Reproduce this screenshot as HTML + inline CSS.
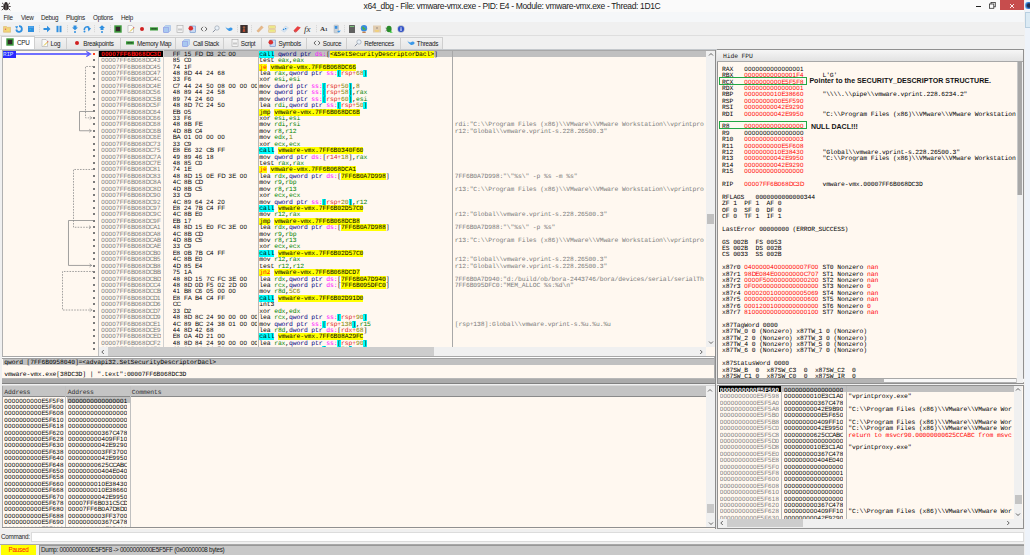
<!DOCTYPE html><html><head><meta charset="utf-8"><style>
*{margin:0;padding:0;box-sizing:border-box}
html,body{width:1030px;height:555px;overflow:hidden;background:#f0f0f0;position:relative}
div{position:absolute}
.m{font-family:"Liberation Mono",monospace;font-size:6.4px;letter-spacing:-0.12px;line-height:6.42px;white-space:pre;color:#000;text-rendering:geometricPrecision;padding-top:1.5px}
.h{font-family:"Liberation Sans",sans-serif;font-size:6.2px;letter-spacing:0.272px}
.h b{font-weight:inherit;display:inline-block;width:3.72px;text-align:center;letter-spacing:0}
.h s{text-decoration:none;letter-spacing:1.9975px}
.u{font-family:"Liberation Sans",sans-serif;font-size:6.3px;letter-spacing:-0.25px;line-height:10px;white-space:pre;color:#1e1e1e}
</style></head><body><div style="left:0px;top:0px;width:1024px;height:11.5px;background:#fafafa"></div><div style="left:1025px;top:0px;width:5px;height:555px;background:#eef3fa"></div><div style="left:1025px;top:1.5px;width:5px;height:7.5px;background:radial-gradient(circle at 80% 50%,#203050 30%,#3a8ae0 60%,#eef3fa 90%)"></div><div style="left:1025px;top:12px;width:5px;height:16px;background:#dbeaf4;border:1px solid #b8cfe0;border-right:none"></div><svg style="position:absolute;left:1px;top:1px;overflow:visible" width="10" height="10" viewBox="0 0 10 10"><g stroke="#3a3030" stroke-width="0.9" fill="none"><path d="M1 1.8L2.8 3.5M9 1.8L7.2 3.5M0.3 5.5H2.3M9.7 5.5H7.7M0.8 9.2L2.6 7.5M9.2 9.2L7.4 7.5"/></g><ellipse cx="5" cy="6" rx="2.7" ry="3.2" fill="#2e2626"/><circle cx="5" cy="2.6" r="1.6" fill="#2e2626"/><path d="M5 3.5V9" stroke="#b0b0b0" stroke-width="0.6"/></svg><div class="u" style="left:0;top:0.5px;width:1024px;text-align:center;font-size:8.5px;letter-spacing:-0.35px;line-height:11px;color:#1a1a1a">x64_dbg - File: vmware-vmx.exe - PID: E4 - Module: vmware-vmx.exe - Thread: 1D1C</div><div style="left:975.5px;top:5.5px;width:5px;height:1.3px;background:#222"></div><svg style="position:absolute;left:989px;top:2px;overflow:visible" width="7" height="7" viewBox="0 0 7 7"><rect x="2" y="0.5" width="4.3" height="4.3" fill="none" stroke="#333" stroke-width="0.8"/><rect x="0.5" y="2" width="4.3" height="4.3" fill="#fafafa" stroke="#333" stroke-width="0.8"/></svg><div style="left:999.5px;top:0px;width:24.5px;height:10px;background:#c74d4d"></div><svg style="position:absolute;left:1008.5px;top:2.5px;overflow:visible" width="6" height="6" viewBox="0 0 6 6"><path d="M1 1L5 5M5 1L1 5" stroke="#fff" stroke-width="0.9"/></svg><div style="left:0px;top:11.5px;width:1024px;height:10.5px;background:#f5f7f9"></div><div class="u" style="left:3.5px;top:12.7px;">File</div><div class="u" style="left:21px;top:12.7px;">View</div><div class="u" style="left:41px;top:12.7px;">Debug</div><div class="u" style="left:66px;top:12.7px;">Plugins</div><div class="u" style="left:93px;top:12.7px;">Options</div><div class="u" style="left:121px;top:12.7px;">Help</div><div style="left:0px;top:22px;width:1024px;height:13px;background:#f0f0f0"></div><div style="left:0px;top:35px;width:1024px;height:1px;background:#dedede"></div><svg style="position:absolute;left:2.8px;top:25px;overflow:visible" width="8" height="8" viewBox="0 0 8 8"><path d="M0.5 1.5H3.5L4.2 2.3H7.5V7.3H0.5Z" fill="#f0d27a" stroke="#d8b060" stroke-width="0.5"/><circle cx="2.5" cy="4.3" r="0.7" fill="#e06060"/><circle cx="5" cy="5" r="0.7" fill="#f8f060"/></svg><svg style="position:absolute;left:15px;top:25px;overflow:visible" width="8" height="8" viewBox="0 0 8 8"><path d="M4 1.2A2.8 2.8 0 1 1 1.3 4.5" fill="none" stroke="#2f8fe0" stroke-width="1.8"/><path d="M0 1.5L3 1L2 4Z" fill="#2f8fe0"/></svg><svg style="position:absolute;left:27px;top:25px;overflow:visible" width="8" height="8" viewBox="0 0 8 8"><rect x="1" y="1" width="6" height="6" fill="#2f8fe0"/><rect x="1.5" y="1.5" width="5" height="1.2" fill="#60b0f0"/><circle cx="3.2" cy="4.6" r="0.6" fill="#20e0e0"/></svg><svg style="position:absolute;left:43px;top:25px;overflow:visible" width="8" height="8" viewBox="0 0 8 8"><path d="M0.5 3H4V0.8L7.5 4L4 7.2V5H0.5Z" fill="#2f8fe0"/></svg><svg style="position:absolute;left:55px;top:25px;overflow:visible" width="8" height="8" viewBox="0 0 8 8"><rect x="1.5" y="0.8" width="2" height="6.4" fill="#2f8fe0"/><rect x="4.5" y="0.8" width="2" height="6.4" fill="#2f8fe0"/></svg><svg style="position:absolute;left:70.5px;top:25px;overflow:visible" width="8" height="8" viewBox="0 0 8 8"><path d="M2.5 0.5H5.5V2.5H7L4 5.2L1 2.5H2.5Z" fill="#2f8fe0"/><circle cx="4" cy="7" r="1" fill="#2f8fe0"/></svg><svg style="position:absolute;left:83px;top:25px;overflow:visible" width="8" height="8" viewBox="0 0 8 8"><path d="M1.3 5A3 3 0 0 1 6 2.3" fill="none" stroke="#2f8fe0" stroke-width="1.6"/><path d="M4.5 1.2L8 3.5L5.5 6.5Z" fill="#2f8fe0"/><circle cx="1.5" cy="6.5" r="1" fill="#2f8fe0"/></svg><svg style="position:absolute;left:98px;top:25px;overflow:visible" width="8" height="8" viewBox="0 0 8 8"><path d="M4 0.3L7 3H5.5V5H2.5V3H1Z" fill="#2f8fe0"/><circle cx="4" cy="7" r="1" fill="#2f8fe0"/></svg><svg style="position:absolute;left:114px;top:25px;overflow:visible" width="8" height="8" viewBox="0 0 8 8"><rect x="0.3" y="0.3" width="7.4" height="7.4" fill="#3c9a3c"/><rect x="1.8" y="1.8" width="4.4" height="4.4" fill="#302828"/></svg><svg style="position:absolute;left:126.69999999999999px;top:25px;overflow:visible" width="8" height="8" viewBox="0 0 8 8"><path d="M1 0.5H5L6.5 2V7.5H1Z" fill="#fafafa" stroke="#a0a0a0" stroke-width="0.5"/><path d="M3 6.5L6.5 3" stroke="#e0c030" stroke-width="1"/><circle cx="6.8" cy="2.7" r="0.6" fill="#e05050"/></svg><svg style="position:absolute;left:138px;top:25px;overflow:visible" width="8" height="8" viewBox="0 0 8 8"><circle cx="4" cy="4" r="2" fill="#d02020"/></svg><svg style="position:absolute;left:150px;top:25px;overflow:visible" width="8" height="8" viewBox="0 0 8 8"><rect x="0" y="2.3" width="8" height="3.2" fill="#3aa03a"/><rect x="1.5" y="3.2" width="1.2" height="1.2" fill="#222"/><rect x="3.4" y="3.2" width="1.2" height="1.2" fill="#222"/><rect x="5.3" y="3.2" width="1.2" height="1.2" fill="#222"/></svg><svg style="position:absolute;left:163px;top:25px;overflow:visible" width="8" height="8" viewBox="0 0 8 8"><path d="M0.5 2.5L2.5 0.5H7.5V5.5L5.5 7.5H0.5Z" fill="#b8d4f0" stroke="#90b0e0" stroke-width="0.5"/><rect x="0.8" y="2.5" width="4.7" height="5" fill="#a8c8f0" stroke="#8080e0" stroke-width="0.4"/></svg><svg style="position:absolute;left:175.5px;top:25px;overflow:visible" width="8" height="8" viewBox="0 0 8 8"><rect x="1" y="0.5" width="6" height="7" fill="#f4f4f4" stroke="#a8a8a8" stroke-width="0.6"/><path d="M3 3.5V5.5M5 3.5V5.5" stroke="#666" stroke-width="0.6"/></svg><svg style="position:absolute;left:187.5px;top:25px;overflow:visible" width="8" height="8" viewBox="0 0 8 8"><rect x="2" y="1" width="5.5" height="6.5" fill="#c8daf4" stroke="#5080c0" stroke-width="0.5"/><circle cx="2.8" cy="3.2" r="2.3" fill="#d83030"/></svg><svg style="position:absolute;left:199.5px;top:25px;overflow:visible" width="8" height="8" viewBox="0 0 8 8"><path d="M3 1.8L1 4L3 6.2M5 1.8L7 4L5 6.2" fill="none" stroke="#444" stroke-width="0.8"/></svg><svg style="position:absolute;left:212px;top:25px;overflow:visible" width="8" height="8" viewBox="0 0 8 8"><circle cx="5" cy="3" r="2.2" fill="#e8f0f8" stroke="#909aa8" stroke-width="0.6"/><path d="M3.4 4.6L0.8 7.2" stroke="#8890a0" stroke-width="1"/></svg><svg style="position:absolute;left:224.5px;top:25px;overflow:visible" width="8" height="8" viewBox="0 0 8 8"><path d="M0.3 1.5Q2 4 4 3.3Q6 1.5 7.8 4Q6.5 6.5 4 6Q1.5 5 0.3 1.5Z" fill="#3a98e8"/></svg><svg style="position:absolute;left:240px;top:25px;overflow:visible" width="8" height="8" viewBox="0 0 8 8"><rect x="0.3" y="0" width="7.4" height="8" fill="#3a3030"/><circle cx="4" cy="2.5" r="1.2" fill="#a06040"/><path d="M3 4H5L5.3 7H2.7Z" fill="#a05030"/><path d="M3 6L5 5" stroke="#e03030" stroke-width="0.6"/></svg><svg style="position:absolute;left:255.5px;top:25px;overflow:visible" width="8" height="8" viewBox="0 0 8 8"><path d="M0.8 6L5.5 0.8L7.2 2.5L2.5 7.2Z" fill="#e8b888" stroke="#d0a070" stroke-width="0.4"/></svg><svg style="position:absolute;left:268px;top:25px;overflow:visible" width="8" height="8" viewBox="0 0 8 8"><rect x="0.5" y="0.5" width="7" height="3.2" rx="0.6" fill="#f0e0a0" stroke="#d8b880" stroke-width="0.5"/><rect x="0.5" y="4.3" width="7" height="3.2" rx="0.6" fill="#f0e0a0" stroke="#d8b880" stroke-width="0.5"/><rect x="2" y="1.5" width="4.5" height="1" fill="#e8f070"/><rect x="2" y="5.3" width="4.5" height="1" fill="#e8f070"/></svg><svg style="position:absolute;left:280.5px;top:25px;overflow:visible" width="8" height="8" viewBox="0 0 8 8"><path d="M0.5 5.5L4.5 1L7.5 2.8L3.5 7.2Z" fill="#dde8f2" stroke="#b0c8e0" stroke-width="0.4"/><rect x="2" y="3.8" width="1.3" height="1.3" fill="#2a8ae0"/><rect x="4" y="3" width="1.3" height="1.3" fill="#2a8ae0"/></svg><svg style="position:absolute;left:292.5px;top:25px;overflow:visible" width="8" height="8" viewBox="0 0 8 8"><path d="M0.5 5.5L4.5 1.2L7.8 2.5L3.5 7Z" fill="#e84040"/><path d="M0.5 5.5L3.5 7L2 7.5Z" fill="#b02020"/></svg><div style="left:304px;top:23.5px;font-family:Liberation Serif;font-style:italic;font-size:9px;line-height:10px;color:#333;white-space:pre">fx</div><div style="left:320px;top:24.5px;font-family:Liberation Serif;font-weight:bold;font-size:7px;line-height:9px;color:#333;white-space:pre">A<span style="font-size:5px">1</span></div><svg style="position:absolute;left:333px;top:25px;overflow:visible" width="8" height="8" viewBox="0 0 8 8"><rect x="1" y="0" width="4.5" height="8" rx="0.8" fill="#c8d0d8" stroke="#a0a8b0" stroke-width="0.4"/><rect x="1.8" y="1" width="2.6" height="2.8" fill="#3a90e0"/><path d="M4 6L7.8 5.5L6 7.8Z" fill="#3a98e8"/></svg><svg style="position:absolute;left:348px;top:25px;overflow:visible" width="8" height="8" viewBox="0 0 8 8"><rect x="1" y="0" width="6" height="8" rx="0.5" fill="#606060"/><rect x="1.8" y="1" width="4.4" height="1" fill="#7ac07a"/></svg><svg style="position:absolute;left:360px;top:25px;overflow:visible" width="8" height="8" viewBox="0 0 8 8"><circle cx="4" cy="3.3" r="3.2" fill="#3a8ae0"/><path d="M2 2Q3 1 4 2.5T6 3.5L5.5 5Q4 4 3 5Z" fill="#4ab040"/><rect x="2.3" y="6.6" width="3.4" height="1.4" fill="#c08050"/></svg><svg style="position:absolute;left:372.5px;top:25px;overflow:visible" width="8" height="8" viewBox="0 0 8 8"><rect x="0" y="0.5" width="8" height="7" fill="#e0ccb0"/><path d="M1.5 5L6.5 5L5.5 7H2.5Z" fill="#f0d080"/><circle cx="4" cy="3" r="1" fill="#b0a090"/></svg><svg style="position:absolute;left:384.5px;top:25px;overflow:visible" width="8" height="8" viewBox="0 0 8 8"><ellipse cx="4" cy="4" rx="2.6" ry="3.2" fill="#2a8a2a"/><path d="M4.5 5L7.8 7.5L5 7.8Z" fill="#30c030"/><path d="M0.5 3L1.8 3.6M0.5 6L1.6 5.4" stroke="#333" stroke-width="0.5"/></svg><svg style="position:absolute;left:397px;top:25px;overflow:visible" width="8" height="8" viewBox="0 0 8 8"><circle cx="4" cy="4" r="3.7" fill="#b0b8c8"/><circle cx="4" cy="4" r="3" fill="#3050c8"/><rect x="3.5" y="3.2" width="1" height="2.8" fill="#fff"/><circle cx="4" cy="2.2" r="0.5" fill="#fff"/></svg><div style="left:39px;top:25px;width:1px;height:8px;background:repeating-linear-gradient(#d8d8d8 0 1px,#eaeaea 1px 2px)"></div><div style="left:67px;top:25px;width:1px;height:8px;background:repeating-linear-gradient(#d8d8d8 0 1px,#eaeaea 1px 2px)"></div><div style="left:94px;top:25px;width:1px;height:8px;background:repeating-linear-gradient(#d8d8d8 0 1px,#eaeaea 1px 2px)"></div><div style="left:110px;top:25px;width:1px;height:8px;background:repeating-linear-gradient(#d8d8d8 0 1px,#eaeaea 1px 2px)"></div><div style="left:237px;top:25px;width:1px;height:8px;background:repeating-linear-gradient(#d8d8d8 0 1px,#eaeaea 1px 2px)"></div><div style="left:251px;top:25px;width:1px;height:8px;background:repeating-linear-gradient(#d8d8d8 0 1px,#eaeaea 1px 2px)"></div><div style="left:316px;top:25px;width:1px;height:8px;background:repeating-linear-gradient(#d8d8d8 0 1px,#eaeaea 1px 2px)"></div><div style="left:344px;top:25px;width:1px;height:8px;background:repeating-linear-gradient(#d8d8d8 0 1px,#eaeaea 1px 2px)"></div><div style="left:1px;top:36px;width:34px;height:13.5px;background:#fff;border:1px solid #cfcfcf;border-bottom:none"></div><div style="left:35px;top:37.4px;width:31.5px;height:11.3px;background:linear-gradient(#f2f2f2,#e6e6e6);border:1px solid #cfcfcf;border-bottom:none;border-left:none"></div><div style="left:66.5px;top:37.4px;width:54.0px;height:11.3px;background:linear-gradient(#f2f2f2,#e6e6e6);border:1px solid #cfcfcf;border-bottom:none;border-left:none"></div><div style="left:120.5px;top:37.4px;width:55.5px;height:11.3px;background:linear-gradient(#f2f2f2,#e6e6e6);border:1px solid #cfcfcf;border-bottom:none;border-left:none"></div><div style="left:176px;top:37.4px;width:48.400000000000006px;height:11.3px;background:linear-gradient(#f2f2f2,#e6e6e6);border:1px solid #cfcfcf;border-bottom:none;border-left:none"></div><div style="left:224.4px;top:37.4px;width:37.79999999999998px;height:11.3px;background:linear-gradient(#f2f2f2,#e6e6e6);border:1px solid #cfcfcf;border-bottom:none;border-left:none"></div><div style="left:262.2px;top:37.4px;width:44.80000000000001px;height:11.3px;background:linear-gradient(#f2f2f2,#e6e6e6);border:1px solid #cfcfcf;border-bottom:none;border-left:none"></div><div style="left:307px;top:37.4px;width:40.30000000000001px;height:11.3px;background:linear-gradient(#f2f2f2,#e6e6e6);border:1px solid #cfcfcf;border-bottom:none;border-left:none"></div><div style="left:347.3px;top:37.4px;width:53.30000000000001px;height:11.3px;background:linear-gradient(#f2f2f2,#e6e6e6);border:1px solid #cfcfcf;border-bottom:none;border-left:none"></div><div style="left:400.6px;top:37.4px;width:42.39999999999998px;height:11.3px;background:linear-gradient(#f2f2f2,#e6e6e6);border:1px solid #cfcfcf;border-bottom:none;border-left:none"></div><svg style="position:absolute;left:6px;top:37.8px;overflow:visible" width="8" height="8" viewBox="0 0 8 8"><rect x="0.3" y="0.3" width="7.4" height="7.4" fill="#3c9a3c"/><rect x="1.8" y="1.8" width="4.4" height="4.4" fill="#302828"/></svg><div class="u" style="left:17px;top:38px;line-height:9px;color:#202020">CPU</div><svg style="position:absolute;left:40.7px;top:38.8px;overflow:visible" width="8" height="8" viewBox="0 0 8 8"><path d="M1 0.5H5L6.5 2V7.5H1Z" fill="#fafafa" stroke="#a0a0a0" stroke-width="0.5"/><path d="M3 6.5L6.5 3" stroke="#e0c030" stroke-width="1"/><circle cx="6.8" cy="2.7" r="0.6" fill="#e05050"/></svg><div class="u" style="left:50.6px;top:38.5px;line-height:9px;color:#202020">Log</div><svg style="position:absolute;left:73px;top:38.8px;overflow:visible" width="8" height="8" viewBox="0 0 8 8"><circle cx="4" cy="4" r="2" fill="#d02020"/></svg><div class="u" style="left:83.2px;top:38.5px;line-height:9px;color:#202020">Breakpoints</div><svg style="position:absolute;left:126px;top:38.8px;overflow:visible" width="8" height="8" viewBox="0 0 8 8"><rect x="0" y="2.3" width="8" height="3.2" fill="#3aa03a"/><rect x="1.5" y="3.2" width="1.2" height="1.2" fill="#222"/><rect x="3.4" y="3.2" width="1.2" height="1.2" fill="#222"/><rect x="5.3" y="3.2" width="1.2" height="1.2" fill="#222"/></svg><div class="u" style="left:137px;top:38.5px;line-height:9px;color:#202020">Memory Map</div><svg style="position:absolute;left:182px;top:38.8px;overflow:visible" width="8" height="8" viewBox="0 0 8 8"><path d="M0.5 2.5L2.5 0.5H7.5V5.5L5.5 7.5H0.5Z" fill="#b8d4f0" stroke="#90b0e0" stroke-width="0.5"/><rect x="0.8" y="2.5" width="4.7" height="5" fill="#a8c8f0" stroke="#8080e0" stroke-width="0.4"/></svg><div class="u" style="left:193px;top:38.5px;line-height:9px;color:#202020">Call Stack</div><svg style="position:absolute;left:230.5px;top:38.8px;overflow:visible" width="8" height="8" viewBox="0 0 8 8"><rect x="1" y="0.5" width="6" height="7" fill="#f4f4f4" stroke="#a8a8a8" stroke-width="0.6"/><path d="M3 3.5V5.5M5 3.5V5.5" stroke="#666" stroke-width="0.6"/></svg><div class="u" style="left:240.7px;top:38.5px;line-height:9px;color:#202020">Script</div><svg style="position:absolute;left:268.3px;top:38.8px;overflow:visible" width="8" height="8" viewBox="0 0 8 8"><rect x="2" y="1" width="5.5" height="6.5" fill="#c8daf4" stroke="#5080c0" stroke-width="0.5"/><circle cx="2.8" cy="3.2" r="2.3" fill="#d83030"/></svg><div class="u" style="left:278.5px;top:38.5px;line-height:9px;color:#202020">Symbols</div><svg style="position:absolute;left:313px;top:38.8px;overflow:visible" width="8" height="8" viewBox="0 0 8 8"><path d="M3 1.8L1 4L3 6.2M5 1.8L7 4L5 6.2" fill="none" stroke="#444" stroke-width="0.8"/></svg><div class="u" style="left:322.7px;top:38.5px;line-height:9px;color:#202020">Source</div><svg style="position:absolute;left:354px;top:38.8px;overflow:visible" width="8" height="8" viewBox="0 0 8 8"><circle cx="5" cy="3" r="2.2" fill="#e8f0f8" stroke="#909aa8" stroke-width="0.6"/><path d="M3.4 4.6L0.8 7.2" stroke="#8890a0" stroke-width="1"/></svg><div class="u" style="left:364.2px;top:38.5px;line-height:9px;color:#202020">References</div><svg style="position:absolute;left:406.7px;top:38.8px;overflow:visible" width="8" height="8" viewBox="0 0 8 8"><path d="M0.3 1.5Q2 4 4 3.3Q6 1.5 7.8 4Q6.5 6.5 4 6Q1.5 5 0.3 1.5Z" fill="#3a98e8"/></svg><div class="u" style="left:416.8px;top:38.5px;line-height:9px;color:#202020">Threads</div><div style="left:0px;top:48.6px;width:1024px;height:0.8px;background:#c4c8cc"></div><div style="left:2px;top:49.6px;width:713px;height:306.4px;background:#fff8f0;border-top:1px solid #a8a8a8"></div><div style="left:2px;top:49.6px;width:1px;height:307px;background:#b0b0b0"></div><div style="left:98px;top:50.5px;width:608px;height:6.42px;background:#c0c0c0"></div><div style="left:99.2px;top:50.7px;width:63.8px;height:6.1px;background:#000"></div><div style="left:97.8px;top:49.6px;width:1.6px;height:306.4px;background:#c0c0c0"></div><div style="left:163.2px;top:49.6px;width:1px;height:297.4px;background:#d0d0d0"></div><div style="left:257.6px;top:49.6px;width:1px;height:297.4px;background:#b8b8b8"></div><div style="left:452.2px;top:49.6px;width:1px;height:297.4px;background:#a8a8a8"></div><div class="m h" style="left:101.2px;top:50.3px;color:#787878;height:296.5px;overflow:hidden"><span style="color:#ff1010;font-weight:bold">00007<b>F</b><b>F</b>6<b>B</b>068<b>D</b><b>C</b>3<b>D</b></span>
00007<b>F</b><b>F</b>6<b>B</b>068<b>D</b><b>C</b>43
00007<b>F</b><b>F</b>6<b>B</b>068<b>D</b><b>C</b>45
00007<b>F</b><b>F</b>6<b>B</b>068<b>D</b><b>C</b>47
00007<b>F</b><b>F</b>6<b>B</b>068<b>D</b><b>C</b>4<b>C</b>
00007<b>F</b><b>F</b>6<b>B</b>068<b>D</b><b>C</b>4<b>E</b>
00007<b>F</b><b>F</b>6<b>B</b>068<b>D</b><b>C</b>56
00007<b>F</b><b>F</b>6<b>B</b>068<b>D</b><b>C</b>5<b>B</b>
00007<b>F</b><b>F</b>6<b>B</b>068<b>D</b><b>C</b>5<b>F</b>
00007<b>F</b><b>F</b>6<b>B</b>068<b>D</b><b>C</b>64
00007<b>F</b><b>F</b>6<b>B</b>068<b>D</b><b>C</b>66
00007<b>F</b><b>F</b>6<b>B</b>068<b>D</b><b>C</b>68
00007<b>F</b><b>F</b>6<b>B</b>068<b>D</b><b>C</b>6<b>B</b>
00007<b>F</b><b>F</b>6<b>B</b>068<b>D</b><b>C</b>6<b>E</b>
00007<b>F</b><b>F</b>6<b>B</b>068<b>D</b><b>C</b>73
00007<b>F</b><b>F</b>6<b>B</b>068<b>D</b><b>C</b>75
00007<b>F</b><b>F</b>6<b>B</b>068<b>D</b><b>C</b>7<b>A</b>
00007<b>F</b><b>F</b>6<b>B</b>068<b>D</b><b>C</b>7<b>E</b>
00007<b>F</b><b>F</b>6<b>B</b>068<b>D</b><b>C</b>81
00007<b>F</b><b>F</b>6<b>B</b>068<b>D</b><b>C</b>83
00007<b>F</b><b>F</b>6<b>B</b>068<b>D</b><b>C</b>8<b>A</b>
00007<b>F</b><b>F</b>6<b>B</b>068<b>D</b><b>C</b>8<b>D</b>
00007<b>F</b><b>F</b>6<b>B</b>068<b>D</b><b>C</b>90
00007<b>F</b><b>F</b>6<b>B</b>068<b>D</b><b>C</b>92
00007<b>F</b><b>F</b>6<b>B</b>068<b>D</b><b>C</b>97
00007<b>F</b><b>F</b>6<b>B</b>068<b>D</b><b>C</b>9<b>C</b>
00007<b>F</b><b>F</b>6<b>B</b>068<b>D</b><b>C</b>9<b>F</b>
00007<b>F</b><b>F</b>6<b>B</b>068<b>D</b><b>C</b><b>A</b>1
00007<b>F</b><b>F</b>6<b>B</b>068<b>D</b><b>C</b><b>A</b>8
00007<b>F</b><b>F</b>6<b>B</b>068<b>D</b><b>C</b><b>A</b><b>B</b>
00007<b>F</b><b>F</b>6<b>B</b>068<b>D</b><b>C</b><b>A</b><b>E</b>
00007<b>F</b><b>F</b>6<b>B</b>068<b>D</b><b>C</b><b>B</b>0
00007<b>F</b><b>F</b>6<b>B</b>068<b>D</b><b>C</b><b>B</b>5
00007<b>F</b><b>F</b>6<b>B</b>068<b>D</b><b>C</b><b>B</b>8
00007<b>F</b><b>F</b>6<b>B</b>068<b>D</b><b>C</b><b>B</b><b>B</b>
00007<b>F</b><b>F</b>6<b>B</b>068<b>D</b><b>C</b><b>B</b><b>D</b>
00007<b>F</b><b>F</b>6<b>B</b>068<b>D</b><b>C</b><b>C</b>4
00007<b>F</b><b>F</b>6<b>B</b>068<b>D</b><b>C</b><b>C</b><b>B</b>
00007<b>F</b><b>F</b>6<b>B</b>068<b>D</b><b>C</b><b>D</b>1
00007<b>F</b><b>F</b>6<b>B</b>068<b>D</b><b>C</b><b>D</b>6
00007<b>F</b><b>F</b>6<b>B</b>068<b>D</b><b>C</b><b>D</b>7
00007<b>F</b><b>F</b>6<b>B</b>068<b>D</b><b>C</b><b>D</b>9
00007<b>F</b><b>F</b>6<b>B</b>068<b>D</b><b>C</b><b>E</b>1
00007<b>F</b><b>F</b>6<b>B</b>068<b>D</b><b>C</b><b>E</b>9
00007<b>F</b><b>F</b>6<b>B</b>068<b>D</b><b>C</b><b>E</b><b>D</b>
00007<b>F</b><b>F</b>6<b>B</b>068<b>D</b><b>C</b><b>F</b>2
00007<b>F</b><b>F</b>6<b>B</b>068<b>D</b><b>C</b><b>F</b><b>A</b></div><div class="m h" style="left:172.8px;top:50.3px;width:84.5px;height:296.5px;overflow:hidden;color:#000"><b>F</b><b>F</b><s> </s>15<s> </s><b>F</b><b>D</b><s> </s><b>D</b>3<s> </s>2<b>C</b><s> </s>00
85<s> </s><b>C</b>0
74<s> </s>1<b>F</b>
48<s> </s>8<b>D</b><s> </s>44<s> </s>24<s> </s>68
33<s> </s><b>F</b>6
<b>C</b>7<s> </s>44<s> </s>24<s> </s>50<s> </s>08<s> </s>00<s> </s>00<s> </s>00
48<s> </s>89<s> </s>44<s> </s>24<s> </s>58
89<s> </s>74<s> </s>24<s> </s>60
48<s> </s>8<b>D</b><s> </s>7<b>C</b><s> </s>24<s> </s>50
<b>E</b><b>B</b><s> </s>05
33<s> </s><b>F</b>6
48<s> </s>8<b>B</b><s> </s><b>F</b><b>E</b>
4<b>D</b><s> </s>8<b>B</b><s> </s><b>C</b>4
<b>B</b><b>A</b><s> </s>01<s> </s>00<s> </s>00<s> </s>00
33<s> </s><b>C</b>9
<b>E</b>8<s> </s><b>E</b>6<s> </s>32<s> </s><b>C</b><b>B</b><s> </s><b>F</b><b>F</b>
49<s> </s>89<s> </s>46<s> </s>18
48<s> </s>85<s> </s><b>C</b>0
74<s> </s>1<b>E</b>
48<s> </s>8<b>D</b><s> </s>15<s> </s>0<b>E</b><s> </s><b>F</b><b>D</b><s> </s>3<b>E</b><s> </s>00
4<b>C</b><s> </s>8<b>B</b><s> </s><b>C</b><b>D</b>
4<b>D</b><s> </s>8<b>B</b><s> </s><b>C</b>5
33<s> </s><b>C</b>9
4<b>C</b><s> </s>89<s> </s>64<s> </s>24<s> </s>20
<b>E</b>8<s> </s>24<s> </s>7<b>B</b><s> </s><b>C</b>4<s> </s><b>F</b><b>F</b>
4<b>C</b><s> </s>8<b>B</b><s> </s><b>E</b>0
<b>E</b><b>B</b><s> </s>17
48<s> </s>8<b>D</b><s> </s>15<s> </s><b>E</b>0<s> </s><b>F</b><b>C</b><s> </s>3<b>E</b><s> </s>00
4<b>C</b><s> </s>8<b>B</b><s> </s><b>C</b><b>D</b>
4<b>D</b><s> </s>8<b>B</b><s> </s><b>C</b>5
33<s> </s><b>C</b>9
<b>E</b>8<s> </s>0<b>B</b><s> </s>7<b>B</b><s> </s><b>C</b>4<s> </s><b>F</b><b>F</b>
4<b>C</b><s> </s>8<b>B</b><s> </s><b>E</b>0
4<b>D</b><s> </s>85<s> </s><b>E</b>4
75<s> </s>1<b>A</b>
48<s> </s>8<b>D</b><s> </s>15<s> </s>7<b>C</b><s> </s><b>F</b><b>C</b><s> </s>3<b>E</b><s> </s>00
48<s> </s>8<b>D</b><s> </s>0<b>D</b><s> </s><b>F</b>5<s> </s>02<s> </s>2<b>D</b><s> </s>00
41<s> </s><b>B</b>8<s> </s><b>C</b>6<s> </s>05<s> </s>00<s> </s>00
<b>E</b>8<s> </s><b>F</b><b>A</b><s> </s><b>B</b>4<s> </s><b>C</b>4<s> </s><b>F</b><b>F</b>
<b>C</b><b>C</b>
33<s> </s><b>D</b>2
48<s> </s>8<b>D</b><s> </s>8<b>C</b><s> </s>24<s> </s>90<s> </s>00<s> </s>00<s> </s>00
4<b>C</b><s> </s>89<s> </s><b>B</b><b>C</b><s> </s>24<s> </s>38<s> </s>01<s> </s>00<s> </s>00
44<s> </s>8<b>D</b><s> </s>42<s> </s>68
<b>E</b>8<s> </s>0<b>A</b><s> </s>4<b>D</b><s> </s>21<s> </s>00
48<s> </s>8<b>D</b><s> </s>84<s> </s>24<s> </s>90<s> </s>00<s> </s>00<s> </s>00
48<s> </s>89<s> </s>44<s> </s>24<s> </s>70</div><div class="m" style="left:259.3px;top:50.3px;width:192.5px;height:296.5px;overflow:hidden;color:#000"><span style="color:#000;background:#00ffff;">call</span> <span style="color:#000080;">qword ptr</span> <span style="color:#ff00ff;">ds:</span><span style="color:#000;">[</span><span style="color:#000;background:#ffff00;">&lt;&amp;SetSecurityDescriptorDacl&gt;</span><span style="color:#000;">]</span>
test <span style="color:#008300;">eax</span>,<span style="color:#008300;">eax</span>
<span style="color:#ff0000;background:#ffff00;">je</span> <span style="color:#000;background:#ffff00;">vmware-vmx.7FF6B068DC66</span>
lea <span style="color:#008300;">rax</span>,<span style="color:#000080;">qword ptr</span> <span style="color:#ff00ff;">ss:</span><span style="color:#000;background:#00ffff;">[</span><span style="color:#e02828;">rsp</span><span style="color:#e02828;">+</span><span style="color:#828200;">68</span><span style="color:#000;background:#00ffff;">]</span>
xor <span style="color:#008300;">esi</span>,<span style="color:#008300;">esi</span>
mov <span style="color:#000080;">dword ptr</span> <span style="color:#ff00ff;">ss:</span><span style="color:#000;background:#00ffff;">[</span><span style="color:#e02828;">rsp</span><span style="color:#e02828;">+</span><span style="color:#828200;">50</span><span style="color:#000;background:#00ffff;">]</span>,<span style="color:#828200;">8</span>
mov <span style="color:#000080;">qword ptr</span> <span style="color:#ff00ff;">ss:</span><span style="color:#000;background:#00ffff;">[</span><span style="color:#e02828;">rsp</span><span style="color:#e02828;">+</span><span style="color:#828200;">58</span><span style="color:#000;background:#00ffff;">]</span>,<span style="color:#008300;">rax</span>
mov <span style="color:#000080;">dword ptr</span> <span style="color:#ff00ff;">ss:</span><span style="color:#000;background:#00ffff;">[</span><span style="color:#e02828;">rsp</span><span style="color:#e02828;">+</span><span style="color:#828200;">60</span><span style="color:#000;background:#00ffff;">]</span>,<span style="color:#008300;">esi</span>
lea <span style="color:#008300;">rdi</span>,<span style="color:#000080;">qword ptr</span> <span style="color:#ff00ff;">ss:</span><span style="color:#000;background:#00ffff;">[</span><span style="color:#e02828;">rsp</span><span style="color:#e02828;">+</span><span style="color:#828200;">50</span><span style="color:#000;background:#00ffff;">]</span>
<span style="color:#000;background:#ffff00;">jmp</span> <span style="color:#000;background:#ffff00;">vmware-vmx.7FF6B068DC6B</span>
xor <span style="color:#008300;">esi</span>,<span style="color:#008300;">esi</span>
mov <span style="color:#008300;">rdi</span>,<span style="color:#008300;">rsi</span>
mov <span style="color:#008300;">r8</span>,<span style="color:#008300;">r12</span>
mov <span style="color:#008300;">edx</span>,<span style="color:#828200;">1</span>
xor <span style="color:#008300;">ecx</span>,<span style="color:#008300;">ecx</span>
<span style="color:#000;background:#00ffff;">call</span> <span style="color:#000;background:#ffff00;">vmware-vmx.7FF6B0340F60</span>
mov <span style="color:#000080;">qword ptr</span> <span style="color:#ff00ff;">ds:</span><span style="color:#000;">[</span><span style="color:#e02828;">r14</span><span style="color:#e02828;">+</span><span style="color:#828200;">18</span><span style="color:#000;">]</span>,<span style="color:#008300;">rax</span>
test <span style="color:#008300;">rax</span>,<span style="color:#008300;">rax</span>
<span style="color:#ff0000;background:#ffff00;">je</span> <span style="color:#000;background:#ffff00;">vmware-vmx.7FF6B068DCA1</span>
lea <span style="color:#008300;">rdx</span>,<span style="color:#000080;">qword ptr</span> <span style="color:#ff00ff;">ds:</span><span style="color:#000;">[</span><span style="color:#000;background:#ffff00;">7FF6B0A7D998</span><span style="color:#000;">]</span>
mov <span style="color:#008300;">r9</span>,<span style="color:#008300;">rbp</span>
mov <span style="color:#008300;">r8</span>,<span style="color:#008300;">r13</span>
xor <span style="color:#008300;">ecx</span>,<span style="color:#008300;">ecx</span>
mov <span style="color:#000080;">qword ptr</span> <span style="color:#ff00ff;">ss:</span><span style="color:#000;background:#00ffff;">[</span><span style="color:#e02828;">rsp</span><span style="color:#e02828;">+</span><span style="color:#828200;">20</span><span style="color:#000;background:#00ffff;">]</span>,<span style="color:#008300;">r12</span>
<span style="color:#000;background:#00ffff;">call</span> <span style="color:#000;background:#ffff00;">vmware-vmx.7FF6B02D57C0</span>
mov <span style="color:#008300;">r12</span>,<span style="color:#008300;">rax</span>
<span style="color:#000;background:#ffff00;">jmp</span> <span style="color:#000;background:#ffff00;">vmware-vmx.7FF6B068DCB8</span>
lea <span style="color:#008300;">rdx</span>,<span style="color:#000080;">qword ptr</span> <span style="color:#ff00ff;">ds:</span><span style="color:#000;">[</span><span style="color:#000;background:#ffff00;">7FF6B0A7D988</span><span style="color:#000;">]</span>
mov <span style="color:#008300;">r9</span>,<span style="color:#008300;">rbp</span>
mov <span style="color:#008300;">r8</span>,<span style="color:#008300;">r13</span>
xor <span style="color:#008300;">ecx</span>,<span style="color:#008300;">ecx</span>
<span style="color:#000;background:#00ffff;">call</span> <span style="color:#000;background:#ffff00;">vmware-vmx.7FF6B02D57C0</span>
mov <span style="color:#008300;">r12</span>,<span style="color:#008300;">rax</span>
test <span style="color:#008300;">r12</span>,<span style="color:#008300;">r12</span>
<span style="color:#ff0000;background:#ffff00;">jnz</span> <span style="color:#000;background:#ffff00;">vmware-vmx.7FF6B068DCD7</span>
lea <span style="color:#008300;">rdx</span>,<span style="color:#000080;">qword ptr</span> <span style="color:#ff00ff;">ds:</span><span style="color:#000;">[</span><span style="color:#000;background:#ffff00;">7FF6B0A7D940</span><span style="color:#000;">]</span>
lea <span style="color:#008300;">rcx</span>,<span style="color:#000080;">qword ptr</span> <span style="color:#ff00ff;">ds:</span><span style="color:#000;">[</span><span style="color:#000;background:#ffff00;">7FF6B095DFC0</span><span style="color:#000;">]</span>
mov <span style="color:#008300;">r8d</span>,<span style="color:#828200;">5C6</span>
<span style="color:#000;background:#00ffff;">call</span> <span style="color:#000;background:#ffff00;">vmware-vmx.7FF6B02D91D0</span>
int3
xor <span style="color:#008300;">edx</span>,<span style="color:#008300;">edx</span>
lea <span style="color:#008300;">rcx</span>,<span style="color:#000080;">qword ptr</span> <span style="color:#ff00ff;">ss:</span><span style="color:#000;background:#00ffff;">[</span><span style="color:#e02828;">rsp</span><span style="color:#e02828;">+</span><span style="color:#828200;">90</span><span style="color:#000;background:#00ffff;">]</span>
mov <span style="color:#000080;">qword ptr</span> <span style="color:#ff00ff;">ss:</span><span style="color:#000;background:#00ffff;">[</span><span style="color:#e02828;">rsp</span><span style="color:#e02828;">+</span><span style="color:#828200;">138</span><span style="color:#000;background:#00ffff;">]</span>,<span style="color:#008300;">r15</span>
lea <span style="color:#008300;">r8d</span>,<span style="color:#000080;">dword ptr</span> <span style="color:#ff00ff;">ds:</span><span style="color:#000;">[</span><span style="color:#e02828;">rdx</span><span style="color:#e02828;">+</span><span style="color:#828200;">68</span><span style="color:#000;">]</span>
<span style="color:#000;background:#00ffff;">call</span> <span style="color:#000;background:#ffff00;">vmware-vmx.7FF6B08A29FC</span>
lea <span style="color:#008300;">rax</span>,<span style="color:#000080;">qword ptr</span> <span style="color:#ff00ff;">ss:</span><span style="color:#000;background:#00ffff;">[</span><span style="color:#e02828;">rsp</span><span style="color:#e02828;">+</span><span style="color:#828200;">90</span><span style="color:#000;background:#00ffff;">]</span>
mov <span style="color:#000080;">qword ptr</span> <span style="color:#ff00ff;">ss:</span><span style="color:#000;background:#00ffff;">[</span><span style="color:#e02828;">rsp</span><span style="color:#e02828;">+</span><span style="color:#828200;">70</span><span style="color:#000;background:#00ffff;">]</span>,<span style="color:#008300;">rax</span></div><div class="m" style="left:454.8px;top:50.3px;width:251.2px;height:296.5px;overflow:hidden;color:#7c7c7c">










rdi:&quot;C:\\Program Files (x86)\\VMware\\VMware Workstation\\vprintpro
r12:&quot;Global\\vmware.vprint-s.228.26500.3&quot;






7FF6B0A7D998:&quot;\&quot;%s\&quot; -p %s -m %s&quot;

r13:&quot;C:\\Program Files (x86)\\VMware\\VMware Workstation\\vprintpro



r12:&quot;Global\\vmware.vprint-s.228.26500.3&quot;

7FF6B0A7D988:&quot;\&quot;%s\&quot; -p %s&quot;

r13:&quot;C:\\Program Files (x86)\\VMware\\VMware Workstation\\vprintpro


r12:&quot;Global\\vmware.vprint-s.228.26500.3&quot;
r12:&quot;Global\\vmware.vprint-s.228.26500.3&quot;

7FF6B0A7D940:&quot;d:/build/ob/bora-2443746/bora/devices/serial/serialTh
7FF6B095DFC0:&quot;MEM_ALLOC %s:%d\n&quot;





[rsp+138]:Global\\vmware.vprint-s.%u.%u.%u



</div><div style="left:93px;top:53px;width:2px;height:2px;background:#ff4020"></div><div style="left:93px;top:59px;width:2px;height:2px;background:#7a7a7a"></div><div style="left:93px;top:66px;width:2px;height:2px;background:#7a7a7a"></div><div style="left:93px;top:72px;width:2px;height:2px;background:#7a7a7a"></div><div style="left:93px;top:78px;width:2px;height:2px;background:#7a7a7a"></div><div style="left:93px;top:85px;width:2px;height:2px;background:#7a7a7a"></div><div style="left:93px;top:91px;width:2px;height:2px;background:#7a7a7a"></div><div style="left:93px;top:98px;width:2px;height:2px;background:#7a7a7a"></div><div style="left:93px;top:104px;width:2px;height:2px;background:#7a7a7a"></div><div style="left:93px;top:110px;width:2px;height:2px;background:#7a7a7a"></div><div style="left:93px;top:117px;width:2px;height:2px;background:#7a7a7a"></div><div style="left:93px;top:123px;width:2px;height:2px;background:#7a7a7a"></div><div style="left:93px;top:130px;width:2px;height:2px;background:#7a7a7a"></div><div style="left:93px;top:136px;width:2px;height:2px;background:#7a7a7a"></div><div style="left:93px;top:143px;width:2px;height:2px;background:#7a7a7a"></div><div style="left:93px;top:149px;width:2px;height:2px;background:#7a7a7a"></div><div style="left:93px;top:155px;width:2px;height:2px;background:#7a7a7a"></div><div style="left:93px;top:162px;width:2px;height:2px;background:#7a7a7a"></div><div style="left:93px;top:168px;width:2px;height:2px;background:#7a7a7a"></div><div style="left:93px;top:175px;width:2px;height:2px;background:#7a7a7a"></div><div style="left:93px;top:181px;width:2px;height:2px;background:#7a7a7a"></div><div style="left:93px;top:188px;width:2px;height:2px;background:#7a7a7a"></div><div style="left:93px;top:194px;width:2px;height:2px;background:#7a7a7a"></div><div style="left:93px;top:200px;width:2px;height:2px;background:#7a7a7a"></div><div style="left:93px;top:207px;width:2px;height:2px;background:#7a7a7a"></div><div style="left:93px;top:213px;width:2px;height:2px;background:#7a7a7a"></div><div style="left:93px;top:220px;width:2px;height:2px;background:#7a7a7a"></div><div style="left:93px;top:226px;width:2px;height:2px;background:#7a7a7a"></div><div style="left:93px;top:232px;width:2px;height:2px;background:#7a7a7a"></div><div style="left:93px;top:239px;width:2px;height:2px;background:#7a7a7a"></div><div style="left:93px;top:245px;width:2px;height:2px;background:#7a7a7a"></div><div style="left:93px;top:252px;width:2px;height:2px;background:#7a7a7a"></div><div style="left:93px;top:258px;width:2px;height:2px;background:#7a7a7a"></div><div style="left:93px;top:265px;width:2px;height:2px;background:#7a7a7a"></div><div style="left:93px;top:271px;width:2px;height:2px;background:#7a7a7a"></div><div style="left:93px;top:277px;width:2px;height:2px;background:#7a7a7a"></div><div style="left:93px;top:284px;width:2px;height:2px;background:#7a7a7a"></div><div style="left:93px;top:290px;width:2px;height:2px;background:#7a7a7a"></div><div style="left:93px;top:297px;width:2px;height:2px;background:#7a7a7a"></div><div style="left:93px;top:303px;width:2px;height:2px;background:#7a7a7a"></div><div style="left:93px;top:310px;width:2px;height:2px;background:#7a7a7a"></div><div style="left:93px;top:316px;width:2px;height:2px;background:#7a7a7a"></div><div style="left:93px;top:322px;width:2px;height:2px;background:#7a7a7a"></div><div style="left:93px;top:329px;width:2px;height:2px;background:#7a7a7a"></div><div style="left:93px;top:335px;width:2px;height:2px;background:#7a7a7a"></div><div style="left:93px;top:342px;width:2px;height:2px;background:#7a7a7a"></div><div style="left:93px;top:348px;width:2px;height:2px;background:#7a7a7a"></div><div style="left:2.5px;top:50.6px;width:13px;height:7px;background:#2828ff"></div><div class="m" style="left:3px;top:50.9px;color:#d0e0ff;font-size:6px;letter-spacing:-0.2px">RIP</div><div style="left:15.5px;top:53px;width:73px;height:1.6px;background:#7070ff"></div><svg style="position:absolute;left:86px;top:50.8px;overflow:visible" width="5" height="6" viewBox="0 0 5 6"><path d="M0.3 0.5L4.5 3L0.3 5.5" fill="none" stroke="#5050ff" stroke-width="1.2"/></svg><svg style="position:absolute;left:84.5px;top:65.94px;overflow:visible" width="9" height="52.36" viewBox="0 0 9 52.36"><path d="M8.50 0.5H0.5V51.86H7.20" fill="none" stroke="#8c8c8c" stroke-width="0.8" stroke-dasharray="1.6 1.2"/><path d="M4.70 50.26L6.70 51.86L4.70 53.46" fill="none" stroke="#8c8c8c" stroke-width="0.7"/></svg><svg style="position:absolute;left:79.0px;top:110.88px;overflow:visible" width="14.5" height="20.26" viewBox="0 0 14.5 20.26"><path d="M14.00 0.5H0.5V19.76H12.70" fill="none" stroke="#8a8a8a" stroke-width="0.8"/><path d="M10.20 18.16L12.20 19.76L10.20 21.36" fill="none" stroke="#8a8a8a" stroke-width="0.7"/></svg><svg style="position:absolute;left:73.2px;top:168.66px;overflow:visible" width="20.3" height="58.78" viewBox="0 0 20.3 58.78"><path d="M19.80 0.5H0.5V58.28H18.50" fill="none" stroke="#8c8c8c" stroke-width="0.8" stroke-dasharray="1.6 1.2"/><path d="M16.00 56.68L18.00 58.28L16.00 59.88" fill="none" stroke="#8c8c8c" stroke-width="0.7"/></svg><svg style="position:absolute;left:67.7px;top:220.02px;overflow:visible" width="25.8" height="45.94" viewBox="0 0 25.8 45.94"><path d="M25.30 0.5H0.5V45.44H24.00" fill="none" stroke="#8a8a8a" stroke-width="0.8"/><path d="M21.50 43.84L23.50 45.44L21.50 47.04" fill="none" stroke="#8a8a8a" stroke-width="0.7"/></svg><svg style="position:absolute;left:61.5px;top:271.38px;overflow:visible" width="32" height="39.52" viewBox="0 0 32 39.52"><path d="M31.50 0.5H0.5V39.02H30.20" fill="none" stroke="#8c8c8c" stroke-width="0.8" stroke-dasharray="1.6 1.2"/><path d="M27.70 37.42L29.70 39.02L27.70 40.62" fill="none" stroke="#8c8c8c" stroke-width="0.7"/></svg><div style="left:706px;top:50.5px;width:9px;height:296.5px;background:#f0f0f0"></div><div style="left:707px;top:214.4px;width:7px;height:9.6px;background:#c0c0c0"></div><svg style="position:absolute;left:707.5px;top:52px;overflow:visible" width="6" height="5" viewBox="0 0 6 5"><path d="M1 3.5L3 1.5L5 3.5" fill="none" stroke="#404040" stroke-width="0.8"/></svg><svg style="position:absolute;left:707.5px;top:340px;overflow:visible" width="6" height="5" viewBox="0 0 6 5"><path d="M1 1.5L3 3.5L5 1.5" fill="none" stroke="#404040" stroke-width="0.8"/></svg><div style="left:98.8px;top:347px;width:607.2px;height:8.6px;background:#f0f0f0"></div><div style="left:108px;top:347px;width:325.5px;height:8.6px;background:#cdcdcd"></div><svg style="position:absolute;left:100px;top:348.5px;overflow:visible" width="6" height="6" viewBox="0 0 6 6"><path d="M3.8 1L1.8 3L3.8 5" fill="none" stroke="#404040" stroke-width="0.8"/></svg><svg style="position:absolute;left:698px;top:348.5px;overflow:visible" width="6" height="6" viewBox="0 0 6 6"><path d="M2.2 1L4.2 3L2.2 5" fill="none" stroke="#404040" stroke-width="0.8"/></svg><div style="left:2px;top:355.8px;width:713px;height:1px;background:#a8a8a8"></div><div style="left:2px;top:357px;width:713px;height:21.5px;background:#fff8f0"></div><div style="left:2px;top:357px;width:713px;height:0.7px;background:#ffffff"></div><div style="left:2px;top:357.8px;width:713px;height:0.8px;background:#a0a0a0"></div><div style="left:2.5px;top:358.5px;width:712px;height:6.1px;background:#c0c0c0"></div><div class="m" style="left:4.3px;top:358.0px;color:#000">qword [7FF6B0958040]=&lt;advapi32.SetSecurityDescriptorDacl&gt;</div><div class="m" style="left:4.3px;top:370.5px;color:#000">vmware-vmx.exe[38DC3D] | ".text":00007FF6B068DC3D</div><div style="left:713.8px;top:357px;width:1.2px;height:21.5px;background:#b0b0b0"></div><div style="left:2px;top:378.1px;width:713px;height:6px;background:#aaaaaa;border-top:0.8px solid #b8b8b8;border-bottom:1px solid #808080"></div><div style="left:2px;top:385.5px;width:713px;height:143px;background:#fff8f0"></div><div style="left:2px;top:384.8px;width:713px;height:0.8px;background:#e8e8e8"></div><div style="left:2px;top:384.8px;width:713px;height:1.6px;background:#d8d8d8"></div><div style="left:2px;top:386.4px;width:703.5px;height:10.9px;background:#c4c4c4;border-bottom:1px solid #8a8a8a"></div><div style="left:2px;top:386.2px;width:1px;height:142px;background:#a8a8a8"></div><div style="left:65.3px;top:386.2px;width:1px;height:141px;background:#c0c0c0"></div><div style="left:129.5px;top:386.2px;width:1px;height:141px;background:#c0c0c0"></div><div class="m" style="left:4.3px;top:388.3px;color:#303030">Address</div><div class="m" style="left:67.8px;top:388.3px;color:#303030">Address</div><div class="m" style="left:131.8px;top:388.3px;color:#303030">Comments</div><div style="left:705.5px;top:386.2px;width:9.5px;height:141.5px;background:#f0f0f0"></div><svg style="position:absolute;left:707px;top:388px;overflow:visible" width="6" height="5" viewBox="0 0 6 5"><path d="M1 3.5L3 1.5L5 3.5" fill="none" stroke="#404040" stroke-width="0.8"/></svg><div style="left:707px;top:503.8px;width:7px;height:8.9px;background:#c8c8c8"></div><svg style="position:absolute;left:707.5px;top:520.5px;overflow:visible" width="6" height="5" viewBox="0 0 6 5"><path d="M1 1.5L3 3.5L5 1.5" fill="none" stroke="#404040" stroke-width="0.8"/></svg><div style="left:66.5px;top:396.8px;width:63px;height:6.4px;background:#c0c0c0"></div><div class="m h" style="left:4.3px;top:397.0px;line-height:6.4px;height:130.7px;overflow:hidden;color:#000">0000000000<b>E</b>5<b>F</b>5<b>F</b>8
0000000000<b>E</b>5<b>F</b>600
0000000000<b>E</b>5<b>F</b>608
0000000000<b>E</b>5<b>F</b>610
0000000000<b>E</b>5<b>F</b>618
0000000000<b>E</b>5<b>F</b>620
0000000000<b>E</b>5<b>F</b>628
0000000000<b>E</b>5<b>F</b>630
0000000000<b>E</b>5<b>F</b>638
0000000000<b>E</b>5<b>F</b>640
0000000000<b>E</b>5<b>F</b>648
0000000000<b>E</b>5<b>F</b>650
0000000000<b>E</b>5<b>F</b>658
0000000000<b>E</b>5<b>F</b>660
0000000000<b>E</b>5<b>F</b>668
0000000000<b>E</b>5<b>F</b>670
0000000000<b>E</b>5<b>F</b>678
0000000000<b>E</b>5<b>F</b>680
0000000000<b>E</b>5<b>F</b>688
0000000000<b>E</b>5<b>F</b>690
0000000000<b>E</b>5<b>F</b>698</div><div class="m h" style="left:68px;top:397.0px;line-height:6.4px;height:130.7px;overflow:hidden;color:#000">0000000000000001
0000000000000000
0000000000000000
0000000000000000
0000000000000000
000000000367<b>C</b>478
000000000409<b>F</b><b>F</b>10
00000000042<b>E</b>9290
0000000003<b>F</b><b>F</b>3700
00000000042<b>E</b>9950
00000000625<b>C</b><b>C</b><b>A</b><b>B</b><b>C</b>
000000000404<b>E</b>040
0000000000000000
0000000010<b>E</b>38430
0000000010<b>E</b>38660
00000000042<b>E</b>9950
00007<b>F</b><b>F</b>6<b>B</b>031<b>C</b>5<b>C</b><b>D</b>
00007<b>F</b><b>F</b>6<b>B</b>0<b>A</b>7<b>D</b>8<b>D</b>0
0000000003<b>F</b><b>F</b>3700
000000000367<b>C</b>478
0000000010<b>E</b>3<b>B</b>430</div><div style="left:2px;top:527.3px;width:713px;height:1px;background:#909090"></div><div style="left:715px;top:49.5px;width:1px;height:479px;background:#8c8c8c"></div><div style="left:716px;top:49.5px;width:1px;height:479px;background:#e4e4e4"></div><div style="left:717px;top:49.2px;width:307px;height:335px;background:#f0f0f0;border:1px solid #909090"></div><div style="left:717.3px;top:50px;width:306px;height:11.6px;background:linear-gradient(#f6f6f6,#e2e2e2);border-bottom:1px solid #a8a8a8"></div><div class="m" style="left:723px;top:52.2px;color:#202020">Hide FPU</div><div style="left:717.5px;top:61.6px;width:300.5px;height:316.7px;background:#fff8f0"></div><div style="left:1017px;top:61.6px;width:6.2px;height:316.7px;background:#f0f0f0"></div><div style="left:1017.3px;top:61.8px;width:4.5px;height:133px;background:#a8a8a8;border-left:1px solid #c8c8c8"></div><div style="left:717.5px;top:378.2px;width:306px;height:5.2px;background:#f8f8f8;border-top:1px solid #a8a8a8;border-bottom:1px solid #b0b0b0"></div><div style="left:718.0px;top:379px;width:166px;height:3.8px;background:#b4b4b4"></div><div style="left:1016px;top:378.2px;width:6.5px;height:5.2px;background:#f0f0f0;border-left:1px solid #c8c8c8"></div><div class="m" style="left:722.0px;top:65.3px;color:#000;">RAX</div><div class="m h" style="left:744.32px;top:65.3px;color:#000;">0000000000000001</div><div class="m" style="left:722.0px;top:71.7px;color:#000;">RBX</div><div class="m h" style="left:744.32px;top:71.7px;color:#ff0000;">00000000000001<b>F</b>4</div><div class="m" style="left:822.44px;top:71.7px;color:#000;">L&#x27;G&#x27;</div><div class="m" style="left:722.0px;top:78.1px;color:#000;">RCX</div><div class="m h" style="left:744.32px;top:78.1px;color:#ff0000;">0000000000<b>E</b>5<b>F</b>5<b>F</b>8</div><div class="m" style="left:722.0px;top:84.5px;color:#000;">RDX</div><div class="m h" style="left:744.32px;top:84.5px;color:#ff0000;">0000000000000001</div><div class="m" style="left:722.0px;top:90.9px;color:#000;">RBP</div><div class="m h" style="left:744.32px;top:90.9px;color:#ff0000;">0000000010<b>E</b>38660</div><div class="m" style="left:822.44px;top:90.9px;color:#000;">&quot;\\\\.\\pipe\\vmware.vprint.228.6234.2&quot;</div><div class="m" style="left:722.0px;top:97.3px;color:#000;">RSP</div><div class="m h" style="left:744.32px;top:97.3px;color:#ff0000;">0000000000<b>E</b>5<b>F</b>590</div><div class="m" style="left:722.0px;top:103.7px;color:#000;">RSI</div><div class="m h" style="left:744.32px;top:103.7px;color:#ff0000;">00000000042<b>E</b>9290</div><div class="m" style="left:722.0px;top:110.1px;color:#000;">RDI</div><div class="m h" style="left:744.32px;top:110.1px;color:#ff0000;">00000000042<b>E</b>9950</div><div class="m" style="left:822.44px;top:110.1px;color:#000;">&quot;C:\\Program Files (x86)\\VMware\\VMware Workstation</div><div class="m" style="left:722.0px;top:122.9px;color:#000;">R8</div><div class="m h" style="left:744.32px;top:122.9px;color:#ff0000;">0000000000000000</div><div class="m" style="left:722.0px;top:129.3px;color:#000;">R9</div><div class="m h" style="left:744.32px;top:129.3px;color:#000;">0000000000000000</div><div class="m" style="left:722.0px;top:135.7px;color:#000;">R10</div><div class="m h" style="left:744.32px;top:135.7px;color:#ff0000;">0000000000000003</div><div class="m" style="left:722.0px;top:142.1px;color:#000;">R11</div><div class="m h" style="left:744.32px;top:142.1px;color:#ff0000;">0000000000<b>E</b>5<b>F</b>608</div><div class="m" style="left:722.0px;top:148.5px;color:#000;">R12</div><div class="m h" style="left:744.32px;top:148.5px;color:#ff0000;">0000000010<b>E</b>38430</div><div class="m" style="left:822.44px;top:148.5px;color:#000;">&quot;Global\\vmware.vprint-s.228.26500.3&quot;</div><div class="m" style="left:722.0px;top:154.9px;color:#000;">R13</div><div class="m h" style="left:744.32px;top:154.9px;color:#ff0000;">00000000042<b>E</b>9950</div><div class="m" style="left:822.44px;top:154.9px;color:#000;">&quot;C:\\Program Files (x86)\\VMware\\VMware Workstation</div><div class="m" style="left:722.0px;top:161.3px;color:#000;">R14</div><div class="m h" style="left:744.32px;top:161.3px;color:#ff0000;">00000000042<b>E</b>9290</div><div class="m" style="left:722.0px;top:167.7px;color:#000;">R15</div><div class="m h" style="left:744.32px;top:167.7px;color:#ff0000;">0000000000000000</div><div class="m" style="left:722.0px;top:180.5px;color:#000;">RIP</div><div class="m h" style="left:744.32px;top:180.5px;color:#ff0000;">00007<b>F</b><b>F</b>6<b>B</b>068<b>D</b><b>C</b>3<b>D</b></div><div class="m" style="left:822.44px;top:180.5px;color:#000;">vmware-vmx.00007FF6B068DC3D</div><div class="m" style="left:722.0px;top:193.3px;color:#000;">RFLAGS   0000000000000344</div><div class="m" style="left:722.0px;top:199.7px;color:#000;">ZF 1  PF 1  AF 0</div><div class="m" style="left:722.0px;top:206.1px;color:#000;">OF 0  SF 0  DF 0</div><div class="m" style="left:722.0px;top:212.5px;color:#000;">CF 0  TF 1  IF 1</div><div class="m" style="left:722.0px;top:225.3px;color:#000;">LastError 00000000 (ERROR_SUCCESS)</div><div class="m" style="left:722.0px;top:238.1px;color:#000;">GS 002B  FS 0053</div><div class="m" style="left:722.0px;top:244.5px;color:#000;">ES 002B  DS 002B</div><div class="m" style="left:722.0px;top:250.9px;color:#000;">CS 0033  SS 002B</div><div class="m" style="left:722.0px;top:263.7px;color:#000;">x87r0</div><div class="m h" style="left:744.32px;top:263.7px;color:#ff0000;">04000004000000007<b>F</b>00</div><div class="m" style="left:822.44px;top:263.7px;color:#000;">ST0 Nonzero</div><div class="m" style="left:867.08px;top:263.7px;color:#ff0000;">nan</div><div class="m" style="left:722.0px;top:270.1px;color:#000;">x87r1</div><div class="m h" style="left:744.32px;top:270.1px;color:#ff0000;">98<b>D</b><b>E</b>084<b>E</b>00000000<b>C</b>707</div><div class="m" style="left:822.44px;top:270.1px;color:#000;">ST1 Nonzero</div><div class="m" style="left:867.08px;top:270.1px;color:#ff0000;">nan</div><div class="m" style="left:722.0px;top:276.5px;color:#000;">x87r2</div><div class="m h" style="left:744.32px;top:276.5px;color:#ff0000;">0000<b>F</b>500000000000200</div><div class="m" style="left:822.44px;top:276.5px;color:#000;">ST2 Nonzero</div><div class="m" style="left:867.08px;top:276.5px;color:#ff0000;">nan</div><div class="m" style="left:722.0px;top:282.9px;color:#000;">x87r3</div><div class="m h" style="left:744.32px;top:282.9px;color:#ff0000;">0<b>F</b>000000000000000000</div><div class="m" style="left:822.44px;top:282.9px;color:#000;">ST3 Nonzero</div><div class="m" style="left:867.08px;top:282.9px;color:#ff0000;">0</div><div class="m" style="left:722.0px;top:289.3px;color:#000;">x87r4</div><div class="m h" style="left:744.32px;top:289.3px;color:#ff0000;">00002001000000005069</div><div class="m" style="left:822.44px;top:289.3px;color:#000;">ST4 Nonzero</div><div class="m" style="left:867.08px;top:289.3px;color:#ff0000;">nan</div><div class="m" style="left:722.0px;top:295.7px;color:#000;">x87r5</div><div class="m h" style="left:744.32px;top:295.7px;color:#ff0000;">00000000000000000600</div><div class="m" style="left:822.44px;top:295.7px;color:#000;">ST5 Nonzero</div><div class="m" style="left:867.08px;top:295.7px;color:#ff0000;">nan</div><div class="m" style="left:722.0px;top:302.1px;color:#000;">x87r6</div><div class="m h" style="left:744.32px;top:302.1px;color:#ff0000;">00012001000000000000</div><div class="m" style="left:822.44px;top:302.1px;color:#000;">ST6 Nonzero</div><div class="m" style="left:867.08px;top:302.1px;color:#ff0000;">0</div><div class="m" style="left:722.0px;top:308.5px;color:#000;">x87r7</div><div class="m h" style="left:744.32px;top:308.5px;color:#ff0000;">81000000000000000100</div><div class="m" style="left:822.44px;top:308.5px;color:#000;">ST7 Nonzero</div><div class="m" style="left:867.08px;top:308.5px;color:#ff0000;">nan</div><div class="m" style="left:722.0px;top:321.3px;color:#000;">x87TagWord 0000</div><div class="m" style="left:722.0px;top:327.7px;color:#000;">x87TW_0 0 (Nonzero) x87TW_1 0 (Nonzero)</div><div class="m" style="left:722.0px;top:334.1px;color:#000;">x87TW_2 0 (Nonzero) x87TW_3 0 (Nonzero)</div><div class="m" style="left:722.0px;top:340.5px;color:#000;">x87TW_4 0 (Nonzero) x87TW_5 0 (Nonzero)</div><div class="m" style="left:722.0px;top:346.9px;color:#000;">x87TW_6 0 (Nonzero) x87TW_7 0 (Nonzero)</div><div class="m" style="left:722.0px;top:359.7px;color:#000;">x87StatusWord 0000</div><div class="m" style="left:722.0px;top:366.1px;color:#000;">x87SW_B  0  x87SW_C3  0  x87SW_C2  0</div><div class="m" style="left:722.0px;top:372.5px;color:#000;">x87SW_C1 0  x87SW_C0  0  x87SW_IR  0</div><div style="left:719.3px;top:77px;width:87.3px;height:7.6px;border:1.2px solid #22a846"></div><div style="left:719.3px;top:120.7px;width:87.3px;height:8.3px;border:1.2px solid #22a846"></div><div class="u" style="left:809.4px;top:76.7px;font-size:7.1px;letter-spacing:0;line-height:9px;font-weight:bold;color:#141414">Pointer to the SECURITY_DESCRIPTOR STRUCTURE.</div><div class="u" style="left:811px;top:121.5px;font-size:7px;letter-spacing:0;line-height:9px;font-weight:bold;color:#141414">NULL DACL!!!</div><div style="left:717px;top:384.8px;width:307px;height:144px;background:#fff8f0;border:1px solid #909090"></div><div style="left:718.5px;top:386px;width:295px;height:6.4px;background:#c0c0c0"></div><div style="left:718.5px;top:386px;width:62.5px;height:6.4px;background:#000"></div><div style="left:781px;top:385.5px;width:1px;height:133.5px;background:#b8b8b8"></div><div style="left:845.5px;top:385.5px;width:1px;height:133.5px;background:#b8b8b8"></div><div class="m h" style="left:719.7px;top:386.2px;line-height:6.4px;height:133px;overflow:hidden;color:#7c7c7c"><span style="color:#fff;font-weight:bold">0000000000<b>E</b>5<b>F</b>590</span>
0000000000<b>E</b>5<b>F</b>598
0000000000<b>E</b>5<b>F</b>5<b>A</b>0
0000000000<b>E</b>5<b>F</b>5<b>A</b>8
0000000000<b>E</b>5<b>F</b>5<b>B</b>0
0000000000<b>E</b>5<b>F</b>5<b>B</b>8
0000000000<b>E</b>5<b>F</b>5<b>C</b>0
0000000000<b>E</b>5<b>F</b>5<b>C</b>8
0000000000<b>E</b>5<b>F</b>5<b>D</b>0
0000000000<b>E</b>5<b>F</b>5<b>D</b>8
0000000000<b>E</b>5<b>F</b>5<b>E</b>0
0000000000<b>E</b>5<b>F</b>5<b>E</b>8
0000000000<b>E</b>5<b>F</b>5<b>F</b>0
0000000000<b>E</b>5<b>F</b>5<b>F</b>8
0000000000<b>E</b>5<b>F</b>600
0000000000<b>E</b>5<b>F</b>608
0000000000<b>E</b>5<b>F</b>610
0000000000<b>E</b>5<b>F</b>618
0000000000<b>E</b>5<b>F</b>620
0000000000<b>E</b>5<b>F</b>628
0000000000<b>E</b>5<b>F</b>630</div><div class="m h" style="left:784px;top:386.2px;line-height:6.4px;height:133px;overflow:hidden;color:#000">0000000000000000
0000000010<b>E</b>3<b>C</b>1<b>A</b>0
000000000367<b>C</b>478
00000000042<b>E</b>9<b>B</b>90
0000000000<b>E</b>5<b>F</b>650
000000000409<b>F</b><b>F</b>10
00000000042<b>E</b>9950
00000000625<b>C</b><b>C</b><b>A</b><b>B</b><b>C</b>
0000000000000000
0000000010<b>E</b>3<b>C</b>1<b>A</b>0
000000000367<b>C</b>478
000000000404<b>E</b>040
0000000000000000
0000000000000001
0000000000000000
0000000000000000
0000000000000000
0000000000000000
000000000367<b>C</b>478
000000000409<b>F</b><b>F</b>10
00000000042<b>E</b>9290</div><div class="m" style="left:848.3px;top:386.2px;line-height:6.4px;height:133px;width:165px;overflow:hidden;color:#000">
&quot;vprintproxy.exe&quot;

&quot;C:\\Program Files (x86)\\VMware\\VMware Wor

&quot;C:\\Program Files (x86)\\VMware\\VMware Wor
&quot;C:\\Program Files (x86)\\VMware\\VMware Wor
<span style="color:#ff0000">return to msvcr90.00000000625CCABC from msvc</span>

&quot;vprintproxy.exe&quot;









&quot;C:\\Program Files (x86)\\VMware\\VMware Wor
</div><div style="left:1013.7px;top:385.5px;width:8.8px;height:133.5px;background:#f0f0f0"></div><div style="left:1014.5px;top:494.7px;width:7px;height:9.3px;background:#c4c4c4"></div><svg style="position:absolute;left:1015px;top:387px;overflow:visible" width="6" height="5" viewBox="0 0 6 5"><path d="M1 3.5L3 1.5L5 3.5" fill="none" stroke="#404040" stroke-width="0.8"/></svg><svg style="position:absolute;left:1015px;top:512px;overflow:visible" width="6" height="5" viewBox="0 0 6 5"><path d="M1 1.5L3 3.5L5 1.5" fill="none" stroke="#404040" stroke-width="0.8"/></svg><div style="left:717.5px;top:519px;width:305.5px;height:8.5px;background:#f0f0f0"></div><div style="left:727px;top:519.3px;width:76px;height:7.5px;background:#cdcdcd"></div><svg style="position:absolute;left:719px;top:520px;overflow:visible" width="6" height="6" viewBox="0 0 6 6"><path d="M3.8 1L1.8 3L3.8 5" fill="none" stroke="#404040" stroke-width="0.8"/></svg><svg style="position:absolute;left:1005px;top:520px;overflow:visible" width="6" height="6" viewBox="0 0 6 6"><path d="M2.2 1L4.2 3L2.2 5" fill="none" stroke="#404040" stroke-width="0.8"/></svg><div class="u" style="left:1px;top:531.6px;line-height:10px">Command:</div><div style="left:30.5px;top:531.5px;width:993.5px;height:10px;background:#fff;border:1px solid #dcdcdc"></div><div style="left:0px;top:543.8px;width:1024px;height:0.8px;background:#a8a8a8"></div><div style="left:39px;top:544.8px;width:985px;height:10.2px;background:#c8c8c8;border-left:1px solid #989898;border-top:1px solid #989898"></div><div style="left:1px;top:545px;width:35px;height:9.5px;background:#ffff00"></div><div class="u" style="left:1px;top:545px;width:35px;text-align:center;line-height:9.5px;color:#ff1010">Paused</div><div class="u" style="left:41px;top:545px;line-height:10px;color:#202020;letter-spacing:-0.31px">Dump: 0000000000E5F5F8 -&gt; 0000000000E5F5FF (0x00000008 bytes)</div></body></html>
